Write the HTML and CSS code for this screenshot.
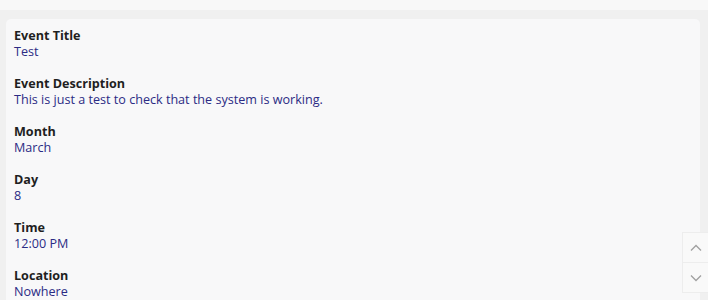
FILE: index.html
```html
<!DOCTYPE html>
<html lang="en">
<head>
    <meta charset="UTF-8">
    <meta name="viewport" content="width=device-width, initial-scale=1.0">
    <title>Event Details</title>
    <link rel="stylesheet" href="styles.css">
</head>
<body>

    <div class="top-strip"></div>

    <div class="page">
        <div class="card">
            <div class="field">
                <div class="label">Event Title</div>
                <div class="value">Test</div>
            </div>
            <div class="field">
                <div class="label">Event Description</div>
                <div class="value">This is just a test to check that the system is working.</div>
            </div>
            <div class="field">
                <div class="label">Month</div>
                <div class="value">March</div>
            </div>
            <div class="field">
                <div class="label">Day</div>
                <div class="value">8</div>
            </div>
            <div class="field">
                <div class="label">Time</div>
                <div class="value">12:00 PM</div>
            </div>
            <div class="field">
                <div class="label">Location</div>
                <div class="value">Nowhere</div>
            </div>
        </div>
    </div>

    <div class="scroll-buttons">
        <div class="scroll-btn">
            <svg width="12" height="8" viewBox="0 0 12 8"><path d="M1 6.5 L6 1.5 L11 6.5" fill="none" stroke="#a0a0a0" stroke-width="1.3"/></svg>
        </div>
        <div class="scroll-btn">
            <svg width="12" height="8" viewBox="0 0 12 8"><path d="M1 1.5 L6 6.5 L11 1.5" fill="none" stroke="#a0a0a0" stroke-width="1.3"/></svg>
        </div>
    </div>

</body>
</html>
```

FILE: styles.css
```css
body {
    margin: 0;
    font-family: "Open Sans", "Noto Sans", sans-serif;
    background-color: #f0f0f0;
    overflow: hidden;
}
.top-strip {
    height: 10px;
    background-color: #f8f8f8;
}
.page {
    padding: 9px 8px 0 6px;
}
.card {
    background-color: #f8f8f9;
    border-radius: 5px;
    padding: 9px 8px 40px 8px;
}
.field {
    margin-bottom: 16px;
}
.label {
    font-size: 12.6px;
    font-weight: bold;
    color: #1f1f1f;
    line-height: 16px;
}
.value {
    font-size: 12.6px;
    color: #2b2b84;
    line-height: 16px;
}
.scroll-buttons {
    position: fixed;
    right: 0;
    top: 232px;
    width: 25px;
    border: 1px solid #ededed;
    border-right: none;
    background-color: #f9f9f9;
}
.scroll-btn {
    height: 29px;
    display: flex;
    align-items: center;
    justify-content: center;
}
.scroll-btn + .scroll-btn {
    border-top: 1px solid #ededed;
}
```
